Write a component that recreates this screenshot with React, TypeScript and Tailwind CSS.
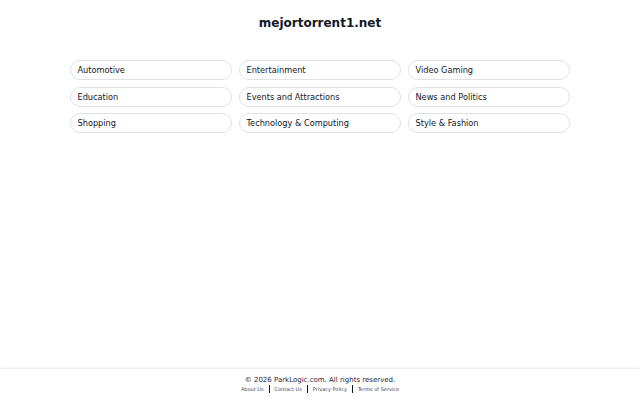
const categories = [
  "Automotive",
  "Entertainment",
  "Video Gaming",
  "Education",
  "Events and Attractions",
  "News and Politics",
  "Shopping",
  "Technology & Computing",
  "Style & Fashion",
];

const links = ["About Us", "Contact Us", "Privacy Policy", "Terms of Service"];

export default function App() {
  return (
    <div
      className="flex h-[400px] w-[640px] flex-col bg-white text-[#111827]"
      style={{ fontFamily: '"DejaVu Sans", sans-serif' }}
    >
      <main className="flex-1">
        <h1 className="pt-[15px] text-center text-[12px] font-bold leading-[16px]">
          mejortorrent1.net
        </h1>
        <div className="mx-auto mt-[29px] grid w-[500px] grid-cols-3 gap-x-[7px] gap-y-[6.5px]">
          {categories.map((c) => (
            <a
              key={c}
              href="#"
              className="flex h-[20px] items-center rounded-full border border-[#dfe2e6] px-[6.5px] pt-px text-[8.2px] text-[#111827]"
            >
              {c}
            </a>
          ))}
        </div>
      </main>

      <footer className="flex h-[32px] flex-col items-center border-t border-[#eeeeee] pt-[6px] shadow-[0_-1px_2px_rgba(0,0,0,0.03)]">
        <p className="text-[7px] leading-[10px] text-[#1f2937]">
          © 2026 ParkLogic.com. All rights reserved.
        </p>
        <div className="flex items-center gap-[5px] text-[5px] leading-[8px] text-[#374151]">
          {links.map((l, i) => (
            <span key={l} className="flex items-center gap-[5px]">
              {i > 0 && <span className="h-[8px] w-px bg-[#111827]" />}
              <a href="#">{l}</a>
            </span>
          ))}
        </div>
      </footer>
    </div>
  );
}
